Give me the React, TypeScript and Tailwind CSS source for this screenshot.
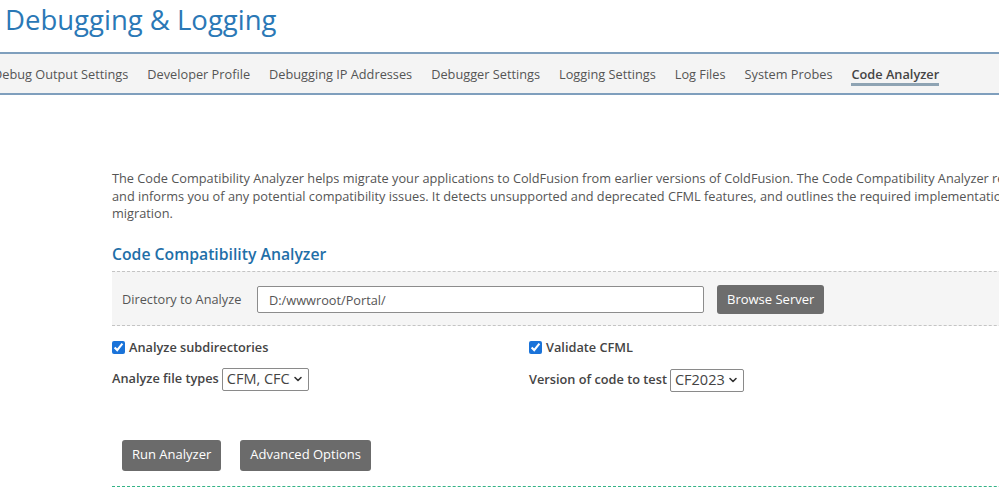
import React, { useState } from 'react';

const tabs = [
  'Debug Output Settings',
  'Developer Profile',
  'Debugging IP Addresses',
  'Debugger Settings',
  'Logging Settings',
  'Log Files',
  'System Probes',
  'Code Analyzer',
];

const Chevron = () => (
  <svg width="10" height="10" viewBox="0 0 10 10" className="shrink-0">
    <path d="M2 3.5 L5 6.5 L8 3.5" fill="none" stroke="#333" strokeWidth="1.6" strokeLinecap="round" strokeLinejoin="round" />
  </svg>
);

const Select: React.FC<{ value: string; options: string[]; width: string }> = ({ value, options, width }) => {
  const [v, setV] = useState(value);
  return (
    <div className={`flex items-center h-[23px] border border-[#8a8a8a] rounded-[2px] bg-white pr-[5px] ${width}`}>
      <select
        value={v}
        onChange={(e) => setV(e.target.value)}
        className="appearance-none bg-transparent outline-none pl-[4px] text-[14.5px] font-normal text-[#444] flex-1 min-w-0 leading-none"
      >
        {options.map((o) => (
          <option key={o}>{o}</option>
        ))}
      </select>
      <Chevron />
    </div>
  );
};

export default function App() {
  const [subdirs, setSubdirs] = useState(true);
  const [validate, setValidate] = useState(true);
  const [dir, setDir] = useState('D:/wwwroot/Portal/');
  const active = 'Code Analyzer';

  return (
    <div className="w-[999px] h-[491px] overflow-hidden bg-white font-['Open_Sans',sans-serif] text-[#555]">
      <h1 className="pl-[5px] pt-[2px] text-[27.5px] leading-[36px] text-[#2a78b6] whitespace-nowrap">
        Debugging &amp; Logging
      </h1>

      <div className="mt-[14px] h-[43px] bg-[#f4f4f4] border-y-2 border-[#7f9fbd] flex items-center">
        <div className="flex items-center gap-[19px] ml-[-7px] whitespace-nowrap text-[12.75px]">
          {tabs.map((t) => (
            <span
              key={t}
              className={
                t === active
                  ? 'font-semibold text-[#444] border-b-[3px] border-[#8ea3b3] leading-[18px] mt-[3px]'
                  : 'text-[#555] leading-[18px]'
              }
            >
              {t}
            </span>
          ))}
        </div>
      </div>

      <div className="ml-[112px] w-[1000px]">
        <p className="mt-[75px] text-[12.75px] leading-[17.5px] text-[#555] whitespace-nowrap">
          The Code Compatibility Analyzer helps migrate your applications to ColdFusion from earlier versions of ColdFusion. The Code Compatibility Analyzer reviews the CFML pages that are part of your application
          <br />
          and informs you of any potential compatibility issues. It detects unsupported and deprecated CFML features, and outlines the required implementation changes that help ensure a smooth
          <br />
          migration.
        </p>

        <h2 className="mt-[20px] text-[15.75px] leading-[22px] font-semibold text-[#1f6fa8]">
          Code Compatibility Analyzer
        </h2>

        {/* directory row */}
        <div className="mt-[6px] h-[55px] bg-[#f5f5f5] border-y border-dashed border-[#c4c4c4] flex items-center pl-[10px] pt-[3px]">
          <label className="text-[12.75px] text-[#555] w-[135px]">Directory to Analyze</label>
          <input
            value={dir}
            onChange={(e) => setDir(e.target.value)}
            className="w-[447px] h-[27px] border border-[#8c8c8c] rounded-[2px] bg-white px-[11px] text-[12.75px] text-[#555] outline-none"
          />
          <button className="ml-[13px] h-[29px] px-[10px] bg-[#6d6d6d] text-white text-[13px] rounded-[3px]">
            Browse Server
          </button>
        </div>

        <div className="mt-[13px] grid grid-cols-[417px_1fr] text-[12.75px] text-[#444]">
          <div className="flex flex-col gap-[11px]">
            <label className="flex items-center gap-[4px] h-[18px] font-semibold">
              <input
                type="checkbox"
                checked={subdirs}
                onChange={() => setSubdirs(!subdirs)}
                className="w-[13px] h-[13px] m-0 accent-[#1a73d9]"
              />
              Analyze subdirectories
            </label>
            <div className="flex items-center gap-[3px] font-semibold">
              <span>Analyze file types</span>
              <Select value="CFM, CFC" options={['CFM, CFC', 'CFM', 'CFC']} width="w-[87px]" />
            </div>
          </div>
          <div className="flex flex-col gap-[11px]">
            <label className="flex items-center gap-[4px] h-[18px] font-semibold">
              <input
                type="checkbox"
                checked={validate}
                onChange={() => setValidate(!validate)}
                className="w-[13px] h-[13px] m-0 accent-[#1a73d9]"
              />
              Validate CFML
            </label>
            <div className="flex items-center gap-[3px] font-semibold mt-[1px]">
              <span>Version of code to test</span>
              <Select value="CF2023" options={['CF2023', 'CF2021', 'CF2018']} width="w-[74px]" />
            </div>
          </div>
        </div>

        <div className="mt-[48px] pl-[10px] flex gap-[19px]">
          <button className="h-[31px] px-[10px] bg-[#6b6b6b] text-white text-[13px] rounded-[3px]">
            Run Analyzer
          </button>
          <button className="h-[31px] px-[10px] bg-[#6b6b6b] text-white text-[13px] rounded-[3px]">
            Advanced Options
          </button>
        </div>

        <div className="mt-[15px] border-t border-dashed border-[#34b386]" />
      </div>
    </div>
  );
}
